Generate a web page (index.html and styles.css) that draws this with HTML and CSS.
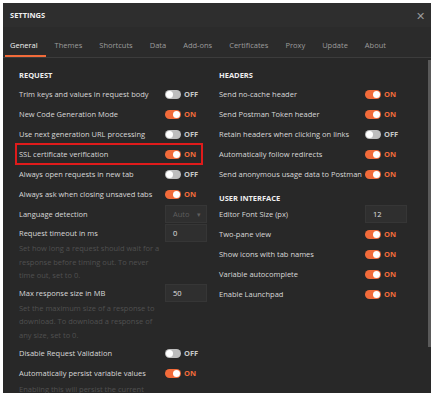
FILE: index.html
```html
<!DOCTYPE html>
<html lang="en">
<head>
    <meta charset="UTF-8">
    <title>Settings</title>
    <link rel="stylesheet" href="styles.css">
</head>
<body>
    <div class="modal">
        <div class="modal-header">
            <span class="modal-title">SETTINGS</span>
            <span class="close">&#x2715;</span>
        </div>
        <div class="tabs">
            <span class="tab active">General</span>
            <span class="tab">Themes</span>
            <span class="tab">Shortcuts</span>
            <span class="tab">Data</span>
            <span class="tab">Add-ons</span>
            <span class="tab">Certificates</span>
            <span class="tab">Proxy</span>
            <span class="tab">Update</span>
            <span class="tab">About</span>
        </div>
        <div class="body">
            <div class="column">
                <div class="section-title">REQUEST</div>
                <div class="row"><span class="label">Trim keys and values in request body</span><span class="toggle off"><i></i>OFF</span></div>
                <div class="row"><span class="label">New Code Generation Mode</span><span class="toggle on"><i></i>ON</span></div>
                <div class="row"><span class="label">Use next generation URL processing</span><span class="toggle off"><i></i>OFF</span></div>
                <div class="row highlight"><span class="label">SSL certificate verification</span><span class="toggle on"><i></i>ON</span></div>
                <div class="row"><span class="label">Always open requests in new tab</span><span class="toggle off"><i></i>OFF</span></div>
                <div class="row"><span class="label">Always ask when closing unsaved tabs</span><span class="toggle on"><i></i>ON</span></div>
                <div class="row"><span class="label">Language detection</span><span class="select">Auto <b>&#9662;</b></span></div>
                <div class="row top"><span class="label">Request timeout in ms</span><span class="input">0</span></div>
                <p class="help">Set how long a request should wait for a response before timing out. To never time out, set to 0.</p>
                <div class="row top"><span class="label">Max response size in MB</span><span class="input">50</span></div>
                <p class="help">Set the maximum size of a response to download. To download a response of any size, set to 0.</p>
                <div class="row"><span class="label">Disable Request Validation</span><span class="toggle off"><i></i>OFF</span></div>
                <div class="row"><span class="label">Automatically persist variable values</span><span class="toggle on"><i></i>ON</span></div>
                <p class="help">Enabling this will persist the current</p>
            </div>
            <div class="column">
                <div class="section-title">HEADERS</div>
                <div class="row"><span class="label">Send no-cache header</span><span class="toggle on"><i></i>ON</span></div>
                <div class="row"><span class="label">Send Postman Token header</span><span class="toggle on"><i></i>ON</span></div>
                <div class="row"><span class="label">Retain headers when clicking on links</span><span class="toggle off"><i></i>OFF</span></div>
                <div class="row"><span class="label">Automatically follow redirects</span><span class="toggle on"><i></i>ON</span></div>
                <div class="row"><span class="label">Send anonymous usage data to Postman</span><span class="toggle on"><i></i>ON</span></div>
                <div class="section-title second">USER INTERFACE</div>
                <div class="row"><span class="label">Editor Font Size (px)</span><span class="input">12</span></div>
                <div class="row"><span class="label">Two-pane view</span><span class="toggle on"><i></i>ON</span></div>
                <div class="row"><span class="label">Show icons with tab names</span><span class="toggle on"><i></i>ON</span></div>
                <div class="row"><span class="label">Variable autocomplete</span><span class="toggle on"><i></i>ON</span></div>
                <div class="row"><span class="label">Enable Launchpad</span><span class="toggle on"><i></i>ON</span></div>
            </div>
            <div class="scrollbar"></div>
        </div>
    </div>
</body>
</html>
```

FILE: styles.css
```css
body {
    margin: 0;
    background-color: white;
    font-family: "Open Sans", Arial, sans-serif;
    font-size: 7.5px;
    color: #d8d8d8;
}
.modal {
    margin: 3px 4px 0 3px;
    height: 390px;
    background-color: #282828;
    overflow: hidden;
    display: flex;
    flex-direction: column;
}
.modal-header {
    flex-shrink: 0;
    height: 24px;
    display: flex;
    align-items: center;
    justify-content: space-between;
    padding: 0 6px 0 7px;
    background-color: #2e2e2e;
}
.modal-title {
    font-weight: bold;
    font-size: 7.5px;
    color: #f0f0f0;
}
.close {
    font-size: 11px;
    color: #9a9a9a;
}
.tabs {
    flex-shrink: 0;
    height: 30px;
    display: flex;
    align-items: flex-end;
    background-color: #2b2b2b;
    border-bottom: 1px solid #3c3c3c;
    padding-left: 2px;
}
.tab {
    white-space: nowrap;
    font-size: 7.5px;
    color: #9c9c9c;
    padding: 0 8px 5px 5px;
    margin-right: 4px;
    border-bottom: 2px solid transparent;
}
.tab.active {
    color: #f2f2f2;
    border-bottom-color: #f26b3a;
}
.body {
    flex: 1;
    min-height: 0;
    display: grid;
    grid-template-columns: 200px 200px;
    align-items: start;
    padding: 11px 0 0 13px;
    position: relative;
}
.column {
    display: flex;
    flex-direction: column;
}
.section-title {
    font-weight: bold;
    font-size: 7.5px;
    color: #eeeeee;
    height: 12px;
    line-height: 12px;
    padding-left: 3px;
    margin-bottom: 3px;
}
.section-title.second {
    margin-top: 8px;
    margin-bottom: 0;
}
.row {
    flex-shrink: 0;
    height: 20px;
    display: grid;
    grid-template-columns: 146px 1fr;
    align-items: center;
    padding-left: 3px;
}
.row.top {
    height: 18px;
}
.highlight {
    outline: 2px solid #e01b1b;
    outline-offset: -1px;
    margin-right: 14px;
}
.label {
    white-space: nowrap;
}
.toggle {
    display: flex;
    align-items: center;
    font-weight: bold;
    font-size: 7.5px;
}
.toggle i {
    width: 16px;
    height: 9px;
    border-radius: 5px;
    margin-right: 3px;
    position: relative;
}
.toggle i::after {
    content: "";
    position: absolute;
    top: 1px;
    width: 7px;
    height: 7px;
    border-radius: 50%;
    background-color: white;
}
.toggle.on {
    color: #f26b3a;
}
.toggle.on i {
    background-color: #f26b3a;
}
.toggle.on i::after {
    right: 1px;
}
.toggle.off {
    color: #c8c8c8;
}
.toggle.off i {
    background-color: #bdbdbd;
}
.toggle.off i::after {
    left: 1px;
}
.select, .input {
    width: 42px;
    height: 18px;
    box-sizing: border-box;
    background-color: #2f2f2f;
    border: 1px solid #363636;
    display: flex;
    align-items: center;
    padding-left: 7px;
}
.select {
    color: #5e5e5e;
    justify-content: space-between;
    padding-right: 5px;
}
.select b {
    font-size: 7px;
    font-weight: normal;
}
.input {
    color: #e0e0e0;
}
.help {
    flex-shrink: 0;
    margin: 0 0 1px 3px;
    width: 144px;
    line-height: 13.5px;
    color: #505050;
}
.scrollbar {
    position: absolute;
    right: 0;
    top: 2px;
    width: 3px;
    height: 287px;
    background-color: #5a5a5a;
}
```
